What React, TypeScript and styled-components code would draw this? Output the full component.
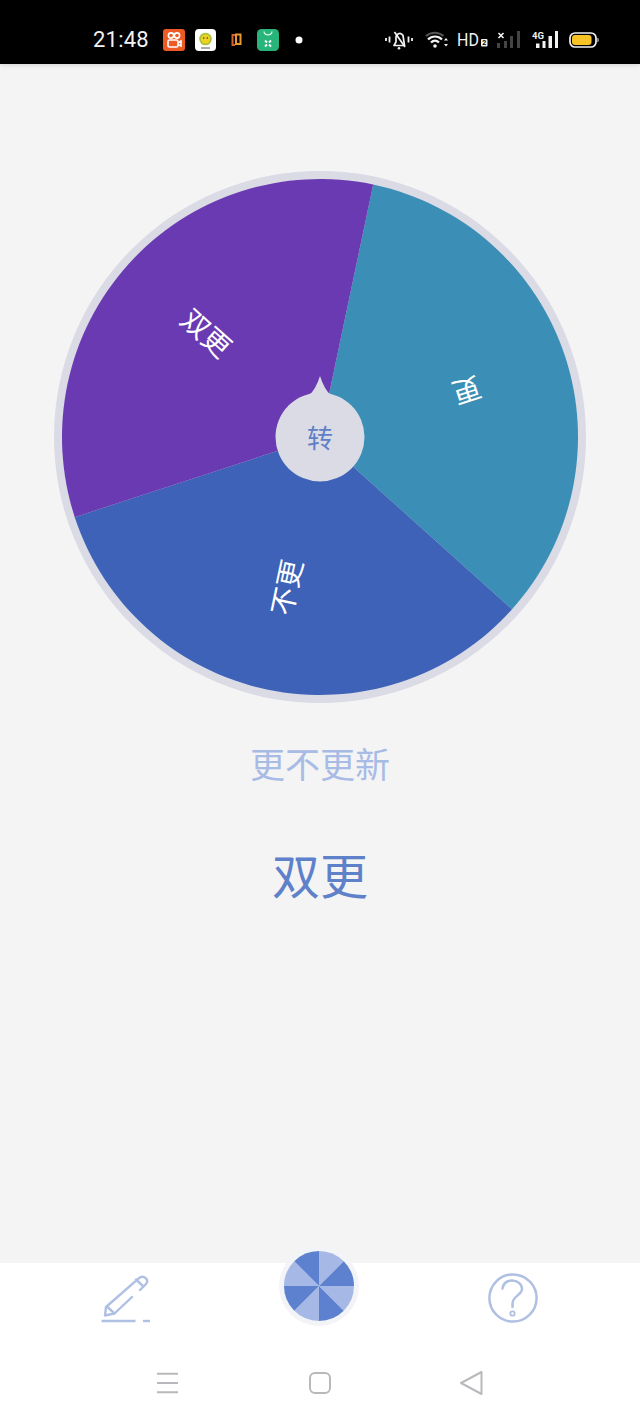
import React from "react";
import styled, { createGlobalStyle } from "styled-components";

const CJK = `"Noto Sans CJK SC", "Noto Sans", sans-serif`;

const Global = createGlobalStyle`
  html, body { margin: 0; padding: 0; background: #f4f4f5; }
  #root { width: 640px; }
`;

const Page = styled.div`
  width: 640px;
  height: 1422px;
  display: flex;
  flex-direction: column;
  background: #f4f4f5;
  font-family: ${CJK};
  overflow: hidden;
`;

const StatusBar = styled.header`
  height: 64px;
  flex: none;
  background: #000;
  box-shadow: 0 1px 5px rgba(0, 0, 0, 0.14);
  display: flex;
  align-items: center;
  padding: 16px 0 0 93px;
  box-sizing: border-box;
  color: #f2f2f2;
`;

const Time = styled.span`
  font-family: Roboto, "Liberation Sans", sans-serif;
  font-size: 22px;
  width: 70px;
  letter-spacing: 0.2px;
  line-height: 24px;
`;

const AppIcons = styled.div`
  display: flex;
  align-items: center;
  width: 222px;
`;

const StatusIcons = styled.div`
  display: flex;
  align-items: center;
`;

const Main = styled.main`
  flex: 1;
  display: flex;
  flex-direction: column;
  align-items: center;
  padding-top: 107px;
`;

const WheelSvg = styled.svg`
  display: block;
  width: 532px;
  height: 532px;
  background: #f5f4f5;
  flex: none;
`;

const SliceLabel = styled.text`
  font-family: ${CJK};
  font-size: 28px;
  fill: #fff;
  text-anchor: middle;
  dominant-baseline: central;
`;

const KnobLabel = styled.text`
  font-family: ${CJK};
  font-size: 26px;
  fill: #5f80c6;
  text-anchor: middle;
  dominant-baseline: central;
`;

const Title = styled.h1`
  margin: 35px 0 0;
  font-size: 35px;
  line-height: 50px;
  font-weight: 400;
  color: #a8bbe5;
`;

const Result = styled.div`
  margin-top: 50px;
  font-size: 48px;
  line-height: 70px;
  color: #5e81c9;
`;

const Bottom = styled.footer`
  height: 159px;
  flex: none;
  background: #fff;
  display: flex;
  flex-direction: column;
`;

const Tools = styled.div`
  height: 108px;
  display: flex;
  justify-content: space-between;
  align-items: flex-start;
  padding: 9px 101px 0 100px;
  box-sizing: border-box;
  position: relative;
`;

const SpinButton = styled.svg`
  position: absolute;
  left: 278px;
  top: -18px;
  width: 82px;
  height: 82px;
`;

const PencilSvg = styled.svg`
  display: block;
  margin-top: 2px;
`;

const Nav = styled.nav`
  display: flex;
  align-items: center;
  justify-content: space-between;
  padding: 0 156px 0 155px;
`;

const StatusGlyph = styled.svg<{ $gap?: number }>`
  display: block;
  flex: none;
  margin-right: ${(p) => p.$gap ?? 0}px;
`;

const HdText = styled.text<{ $dark?: boolean }>`
  font-family: Roboto, "Liberation Sans", sans-serif;
  fill: ${(p) => (p.$dark ? "#000" : "#f2f2f2")};
`;

const C = 266;
const R = 258;
const pt = (deg: number, r: number) => {
  const a = (deg * Math.PI) / 180;
  return [C + r * Math.sin(a), C - r * Math.cos(a)];
};
const slice = (from: number, to: number) => {
  const [x1, y1] = pt(from, R);
  const [x2, y2] = pt(to, R);
  return `M${C} ${C}L${x1} ${y1}A${R} ${R} 0 0 1 ${x2} ${y2}Z`;
};

const slices = [
  { from: 11.9, to: 131.9, color: "#3b8fb7", label: "更" },
  { from: 131.9, to: 251.9, color: "#3d62b7", label: "不更" },
  { from: 251.9, to: 371.9, color: "#6a3ab2", label: "双更" },
];

const Wheel = () => (
  <WheelSvg viewBox="0 0 532 532">
    <circle cx={C} cy={C} r={266} fill="#dadbe5" />
    {slices.map((s) => {
      const mid = (s.from + s.to) / 2;
      const [x, y] = pt(mid, 154);
      return (
        <g key={s.label}>
          <path d={slice(s.from, s.to)} fill={s.color} />
          <SliceLabel x={x} y={y - 3} transform={`rotate(${mid + 90} ${x} ${y})`}>
            {s.label}
          </SliceLabel>
        </g>
      );
    })}
    <path d="M254.5 225Q262 218 266 205Q270 218 277.5 225Z" fill="#dadbe5" />
    <circle cx={C} cy={C} r={44.5} fill="#dadbe5" />
    <KnobLabel x={C} y={C - 1}>转</KnobLabel>
  </WheelSvg>
);

const spinPath = (i: number) => {
  const c = 41;
  const r = 35;
  const p = (d: number) => {
    const a = (d * Math.PI) / 180;
    return `${c + r * Math.sin(a)} ${c - r * Math.cos(a)}`;
  };
  return `M${c} ${c}L${p(i * 45)}A${r} ${r} 0 0 1 ${p((i + 1) * 45)}Z`;
};

const Spin = () => (
  <SpinButton viewBox="0 0 82 82">
    <circle cx="41" cy="41" r="40" fill="#f3f4f7" />
    {[0, 1, 2, 3, 4, 5, 6, 7].map((i) => (
      <path key={i} d={spinPath(i)} fill={i % 2 === 0 ? "#a6b9e6" : "#5e81cf"} />
    ))}
  </SpinButton>
);

const PencilIcon = () => (
  <PencilSvg width="52" height="50" viewBox="0 0 52 50" fill="none" stroke="#b0c0e2" strokeWidth="2.4" strokeLinecap="round" strokeLinejoin="round">
    <path d="M40 16L46 10C48 7.5 47.5 5.5 45.5 4C43.5 2.3 41 2.3 39 4.2L6 33L5 41.5L14.5 39.5L32 23" />
    <path d="M7 32.5L14.5 39.5" />
    <path d="M36 5.5L43.5 12.5" />
    <path d="M1.5 47H35.5" strokeLinecap="butt" />
    <path d="M43 47H50" strokeLinecap="butt" />
  </PencilSvg>
);

const HelpIcon = () => (
  <svg width="52" height="52" viewBox="0 0 52 52" fill="none" stroke="#b0c0e2" strokeWidth="2.5" strokeLinecap="round">
    <circle cx="26" cy="26" r="23.6" />
    <path d="M15.5 16.5C16.5 11 20.5 8.5 25 8.5C30.5 8.5 35 12 35 17C35 23 25.5 24 25.5 31.5V35" />
    <circle cx="25.5" cy="41.5" r="2.2" strokeWidth="1.8" />
  </svg>
);

const navStroke = { fill: "none", stroke: "#b9b9bd", strokeWidth: 2, strokeLinejoin: "round" as const };

const MenuIcon = () => (
  <svg width="24" height="24" viewBox="0 0 24 24" {...navStroke}>
    <path d="M2 2.7H23M2 12H23M2 21.2H23" />
  </svg>
);
const SquareIcon = () => (
  <svg width="24" height="24" viewBox="0 0 24 24" {...navStroke}>
    <rect x="2" y="2" width="20" height="20" rx="5" />
  </svg>
);
const BackIcon = () => (
  <svg width="24" height="24" viewBox="0 0 24 24" {...navStroke}>
    <path d="M1 12L21.5 1V23Z" />
  </svg>
);

const Kuaishou = () => (
  <StatusGlyph $gap={10} width="22" height="22" viewBox="0 0 22 22">
    <rect width="22" height="22" rx="3" fill="#ee5a24" />
    <g fill="none" stroke="#fff" strokeWidth="1.6">
      <circle cx="8" cy="6.5" r="2.6" />
      <circle cx="14" cy="6.5" r="2.6" />
      <rect x="5" y="11" width="10" height="7" rx="1.5" />
      <path d="M15 14L18 12V17L15 15.5" />
    </g>
  </StatusGlyph>
);

const Sunflower = () => (
  <StatusGlyph $gap={13} width="21" height="22" viewBox="0 0 21 22">
    <rect width="21" height="22" rx="4" fill="#fff" />
    <circle cx="10.5" cy="10" r="6.3" fill="#a8c23a" />
    <circle cx="10.5" cy="10" r="4.6" fill="#f1d21f" />
    <circle cx="8.7" cy="9" r="0.8" fill="#333" />
    <circle cx="12.3" cy="9" r="0.8" fill="#333" />
    <path d="M6 19H15" stroke="#555" strokeWidth="1" />
  </StatusGlyph>
);

const Bracket = () => (
  <StatusGlyph $gap={14} width="14" height="14" viewBox="0 0 14 14">
    <path d="M6 2H3.500V12H6" fill="none" stroke="#d4622a" strokeWidth="2" />
    <path d="M7 1.500H11.500V11H7Z" fill="none" stroke="#e89a2c" strokeWidth="2" />
  </StatusGlyph>
);

const GreenApp = () => (
  <StatusGlyph $gap={16} width="22" height="22" viewBox="0 0 22 22">
    <rect width="22" height="22" rx="4.5" fill="#27b57c" />
    <path d="M7 2.5C7.5 7 14.5 7 15 2.5" fill="none" stroke="#d7f3e6" strokeWidth="1.3" />
    <path d="M8 11.5L10 13.5M14 11.5L12 13.5M8 17.5L10 15.5M14 17.5L12 15.5" stroke="#fff" strokeWidth="1.8" />
  </StatusGlyph>
);

const Dot = () => (
  <StatusGlyph width="8" height="8" viewBox="0 0 8 8">
    <circle cx="4" cy="4" r="3.5" fill="#fff" />
  </StatusGlyph>
);

const MuteIcon = () => (
  <StatusGlyph $gap={12} width="28" height="20" viewBox="0 0 28 20" fill="none" stroke="#f2f2f2">
    <path d="M1 8V11M4.5 6.5V12.5M23.5 6.5V12.5M27 8V11" strokeWidth="1.8" />
    <path d="M9 15.5L11 12V7.5C11 4 15.5 1.5 18 5.5L19.5 15.5Z" strokeWidth="1.7" strokeLinejoin="round" />
    <path d="M9.5 2L20 17" strokeWidth="1.7" />
    <circle cx="14" cy="18.3" r="1.3" fill="#f2f2f2" stroke="none" />
  </StatusGlyph>
);

const WifiIcon = () => (
  <StatusGlyph $gap={9} width="23" height="18" viewBox="0 0 23 18" fill="none">
    <path d="M1 5C6 0.5 13.5 0.5 18.5 5" stroke="#555" strokeWidth="2" />
    <path d="M3 8.5C7 4.5 13 4.5 17 8.5" stroke="#f2f2f2" strokeWidth="2.2" />
    <path d="M6 11.5C8.5 9 11.5 9 14 11.5" stroke="#f2f2f2" strokeWidth="2.2" />
    <circle cx="10" cy="15" r="1.8" fill="#f2f2f2" />
    <path d="M19 9.5L21 7L23 9.5ZM19 13L21 15.5L23 13Z" fill="#f2f2f2" />
  </StatusGlyph>
);

const HdIcon = () => (
  <StatusGlyph $gap={9} width="31" height="20" viewBox="0 0 31 20">
    <HdText x="0" y="13.5" fontSize="16" transform="scale(1 1.18)">HD</HdText>
    <rect x="24" y="9" width="6.5" height="7.5" rx="1" fill="#f2f2f2" />
    <HdText $dark x="25.3" y="15.2" fontSize="7" fontWeight="700">2</HdText>
  </StatusGlyph>
);

const SimOff = () => (
  <StatusGlyph $gap={11} width="24" height="18" viewBox="0 0 24 18">
    <path d="M1.5 2L6.5 7M6.5 2L1.5 7" stroke="#f2f2f2" strokeWidth="1.6" />
    <path d="M0 12h3v5H0zM7 10h3v7H7zM13 5h3v12h-3zM20 0h3v17h-3z" fill="#444" />
  </StatusGlyph>
);

const Sim4g = () => (
  <StatusGlyph $gap={11} width="26" height="18" viewBox="0 0 26 18">
    <HdText x="0" y="7.5" fontSize="9.5" fontWeight="700">4G</HdText>
    <path d="M4 12.5h3.5V17H4zM10.5 10h3v7h-3zM16.5 5h3.5v12h-3.5zM23 0h3v17h-3z" fill="#f2f2f2" />
  </StatusGlyph>
);

const Battery = () => (
  <StatusGlyph width="30" height="16" viewBox="0 0 30 16">
    <rect x="1" y="1" width="26" height="14" rx="5" fill="none" stroke="#f2f2f2" strokeWidth="1.7" />
    <rect x="3" y="3" width="19.5" height="10" rx="3" fill="#f7c325" />
    <path d="M28.5 5.5C30 6.5 30 9.5 28.5 10.5Z" fill="#f2f2f2" />
  </StatusGlyph>
);

export default function App() {
  return (
    <Page>
      <Global />
      <StatusBar>
        <Time>21:48</Time>
        <AppIcons>
          <Kuaishou />
          <Sunflower />
          <Bracket />
          <GreenApp />
          <Dot />
        </AppIcons>
        <StatusIcons>
          <MuteIcon />
          <WifiIcon />
          <HdIcon />
          <SimOff />
          <Sim4g />
          <Battery />
        </StatusIcons>
      </StatusBar>
      <Main>
        <Wheel />
        <Title>更不更新</Title>
        <Result>双更</Result>
      </Main>
      <Bottom>
        <Tools>
          <PencilIcon />
          <Spin />
          <HelpIcon />
        </Tools>
        <Nav>
          <MenuIcon />
          <SquareIcon />
          <BackIcon />
        </Nav>
      </Bottom>
    </Page>
  );
}
